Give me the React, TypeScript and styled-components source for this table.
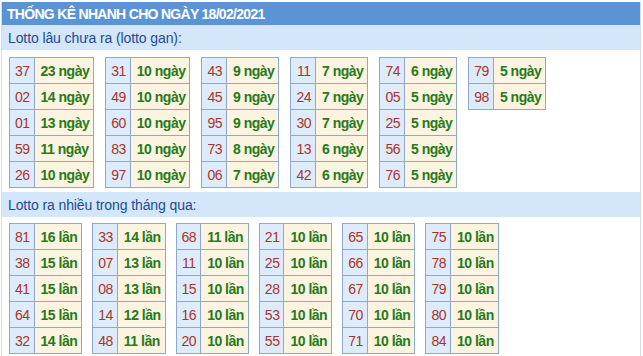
import styled, { createGlobalStyle } from "styled-components";

const GlobalStyle = createGlobalStyle`
  body {
    margin: 0;
    background: #ffffff;
    font-family: "Liberation Sans", Arial, sans-serif;
  }
`;

const Panel = styled.div`
  margin: 2px 2px 0 1px;
  border-left: 1px solid #d3dbe4;
  border-right: 1px solid #d3dbe4;
  height: 354px;
  overflow: hidden;
`;

const Header = styled.div`
  height: 23px;
  line-height: 24px;
  padding-left: 5px;
  background: #5b94d4;
  color: #ffffff;
  font-size: 14px;
  font-weight: bold;
  letter-spacing: -0.7px;
`;

const SubHeader = styled.div`
  height: 25px;
  line-height: 26px;
  padding-left: 6px;
  background: #d4e6f9;
  color: #1d4c93;
  font-size: 14px;
  letter-spacing: -0.1px;
`;

const Body = styled.div<{ $top: number; $gap: number }>`
  display: flex;
  flex-wrap: wrap;
  align-items: flex-start;
  gap: ${(p) => p.$gap}px;
  padding: ${(p) => p.$top}px 0 4px 7px;
`;

const Table = styled.table`
  border-collapse: collapse;
  border: 1px solid #8fa8cd;
`;

const NumCell = styled.td`
  height: 25px;
  padding: 0 4px 0 5px;
  border: 1px solid #8fa8cd;
  background: #deebfa;
  color: #a8352c;
  font-size: 14px;
  letter-spacing: -0.5px;
  text-align: center;
`;

const ValCell = styled.td`
  height: 25px;
  padding: 0 4px 0 6px;
  border: 1px solid #8fa8cd;
  background: #fdf3e1;
  color: #267a1c;
  font-size: 14px;
  font-weight: bold;
  letter-spacing: -0.5px;
  white-space: nowrap;
`;

type Pair = [string, string];

const ganData: Pair[][] = [
  [["37", "23"], ["02", "14"], ["01", "13"], ["59", "11"], ["26", "10"]],
  [["31", "10"], ["49", "10"], ["60", "10"], ["83", "10"], ["97", "10"]],
  [["43", "9"], ["45", "9"], ["95", "9"], ["73", "8"], ["06", "7"]],
  [["11", "7"], ["24", "7"], ["30", "7"], ["13", "6"], ["42", "6"]],
  [["74", "6"], ["05", "5"], ["25", "5"], ["56", "5"], ["76", "5"]],
  [["79", "5"], ["98", "5"]],
];

const nhieuData: Pair[][] = [
  [["81", "16"], ["38", "15"], ["41", "15"], ["64", "15"], ["32", "14"]],
  [["33", "14"], ["07", "13"], ["08", "13"], ["14", "12"], ["48", "11"]],
  [["68", "11"], ["11", "10"], ["15", "10"], ["16", "10"], ["20", "10"]],
  [["21", "10"], ["25", "10"], ["28", "10"], ["53", "10"], ["55", "10"]],
  [["65", "10"], ["66", "10"], ["67", "10"], ["70", "10"], ["71", "10"]],
  [["75", "10"], ["78", "10"], ["79", "10"], ["80", "10"], ["84", "10"]],
];

function StatTable({ rows, unit }: { rows: Pair[]; unit: string }) {
  return (
    <Table>
      <tbody>
        {rows.map(([num, count]) => (
          <tr key={num}>
            <NumCell>{num}</NumCell>
            <ValCell>
              {count} {unit}
            </ValCell>
          </tr>
        ))}
      </tbody>
    </Table>
  );
}

export default function App() {
  return (
    <>
      <GlobalStyle />
      <Panel>
        <Header>THỐNG KÊ NHANH CHO NGÀY 18/02/2021</Header>
        <SubHeader>Lotto lâu chưa ra (lotto gan):</SubHeader>
        <Body $top={7} $gap={11}>
          {ganData.map((rows, i) => (
            <StatTable key={i} rows={rows} unit="ngày" />
          ))}
        </Body>
        <SubHeader>Lotto ra nhiều trong tháng qua:</SubHeader>
        <Body $top={6} $gap={10}>
          {nhieuData.map((rows, i) => (
            <StatTable key={i} rows={rows} unit="lần" />
          ))}
        </Body>
      </Panel>
    </>
  );
}
